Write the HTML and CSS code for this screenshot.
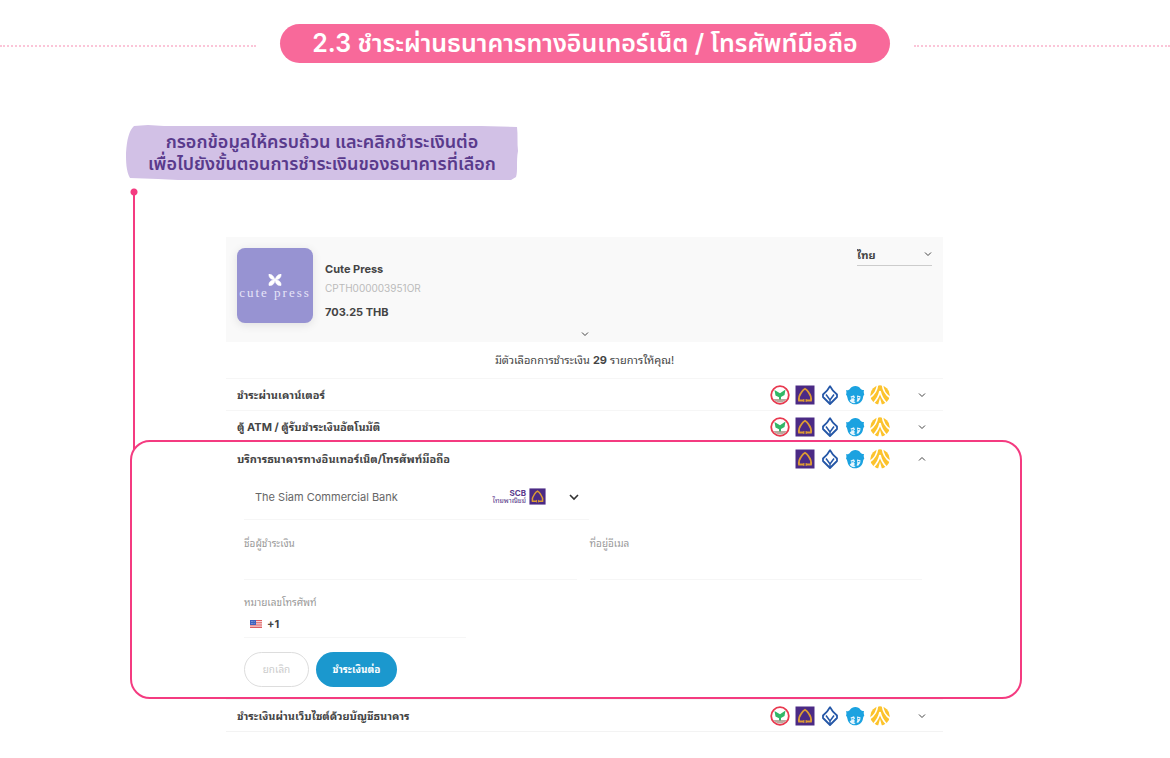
FILE: index.html
```html
<!DOCTYPE html>
<html lang="th">
<head>
    <meta charset="UTF-8">
    <meta name="viewport" content="width=device-width, initial-scale=1.0">
    <title>Cute Press - ชำระเงิน</title>
    <link rel="stylesheet" href="styles.css">
</head>
<body>
    <!-- Shared icons -->
    <svg class="icon-defs" aria-hidden="true">
        <symbol id="kbank" viewBox="0 0 20 20">
            <circle cx="10" cy="10" r="8.8" fill="#fff" stroke="#e8394f" stroke-width="1.800"/>
            <path d="M3.500 14h13c-1.300 2.200-3.500 3.500-6.500 3.500S4.800 16.200 3.500 14z" fill="#b9a99e"/>
            <path d="M9 14.500v-2.300L5.500 10.500 4.500 5l5.500 3.200L15.500 4.500l-1 5.500-3.500 2v2.500z" fill="#32b767"/>
        </symbol>
        <symbol id="scb" viewBox="0 0 20 20">
            <path d="M.5.5h19v19H.5z" fill="#4b2a85"/>
            <path d="M9 15.500H4c-.6-3.500.8-6 2.300-8C7.300 6 8.500 4.500 10 3.700c1.500.8 2.700 2.300 3.700 3.800 1.500 2 2.900 4.500 2.300 8h-5" fill="none" stroke="#dd9c33" stroke-width="1.800"/>
            <path d="M8.900 14v3M11.100 14v3" stroke="#dd9c33" stroke-width="1"/>
        </symbol>
        <symbol id="bbl" viewBox="0 0 20 20">
            <path d="M10 1.200C8.500 4.500 6 7 3 9.500v2.500l7 7 7-7V9.500C14 7 11.500 4.500 10 1.200z" fill="#fff" stroke="#2557a7" stroke-width="1.800" stroke-linejoin="round"/>
            <path d="m6 9.500 4 5.500 4-5.500M10 15v3" fill="none" stroke="#2557a7" stroke-width="1.500"/>
        </symbol>
        <symbol id="ktb" viewBox="0 0 20 20">
            <path d="M1 5c1.800.5 3 0 4-1.300C6.300 1.800 8.200 1 10.300 1c2.400 0 4.200 1 5.200 2.800 1 .9 2 1.300 3.500 1.200-.5 1.500-.2 3 .3 4.500-.7 1-1.300 2-1.400 3.500-.6 3.700-3.700 6.300-7.700 6.300S3.300 17 2.500 13C2.300 11.500 1.800 10.300 1 9.500c.7-1.500.5-3 0-4.500z" fill="#1ba2e0"/>
            <path d="M5.500 11.500 9 10.300l1 2.200-1.300 1.300 1.500 1.200-1.700 1.200 2.200.8-1.500 1.200c-2 0-3.500-1-4.500-2.700l1.800-1.500zM12 10.500l3.500.8-.3 2.700-2 2.800-1.700-.3.8-2z" fill="#e9f6fd"/>
            <path d="M6.500 12.800h2M12.800 12.600h1.700" stroke="#1ba2e0" stroke-width="1"/>
        </symbol>
        <symbol id="bay" viewBox="0 0 20 20">
            <circle cx="10" cy="10" r="9.700" fill="#fcc32c"/>
            <path d="M7.500 0C7 5 4.500 9.500 0 12.500M12.500 0c.5 5 3 9.500 7.500 12.500M10 6c-1 5-3 8.500-6.500 12M10 6c1 5 3 8.500 6.500 12" fill="none" stroke="#fff" stroke-width="1.600"/>
            <path d="M10 13 8 20h4z" fill="#fff"/>
        </symbol>
        <symbol id="chevron" viewBox="0 0 8 8">
            <path d="m1 2.500 3 3 3-3" fill="none" stroke="currentColor"/>
        </symbol>
    </svg>

    <header class="section-title">
        <h1>2.3 ชำระผ่านธนาคารทางอินเทอร์เน็ต / โทรศัพท์มือถือ</h1>
    </header>

    <main>
        <div class="note">
            <svg class="note-bg" viewBox="0 0 392 56" preserveAspectRatio="none" aria-hidden="true">
                <path d="M8 1 22 0l16 1h317l36 1c1 8 0 16 1 24-2 10 0 20-2 26l-5 3H60l-8 0-20-1-28-1C0 46 0 36 0 28 1 14 3 6 8 1z" fill="#d2c1e6"/>
            </svg>
            <p>กรอกข้อมูลให้ครบถ้วน และคลิกชำระเงินต่อ<br>เพื่อไปยังขั้นตอนการชำระเงินของธนาคารที่เลือก</p>
        </div>

        <div class="checkout">
            <div class="merchant">
                <div class="merchant-logo">
                    <svg viewBox="0 0 14 12" aria-hidden="true">
                        <path d="M7 6C6 2 3 0 1 0c-.5 3 1.500 5.500 6 6zM7 6c1-4 4-6 6-6 .5 3-1.500 5.500-6 6zM7 6c-4 0-6.500 2-6 5.500C4 12 6.500 10 7 6zM7 6c4 0 6.500 2 6 5.500C10 12 7.500 10 7 6z" fill="#fff" stroke="#fff" stroke-width=".6"/>
                    </svg>
                    <span>cute press</span>
                </div>
                <div class="merchant-info">
                    <strong>Cute Press</strong>
                    <span class="order-id">CPTH000003951OR</span>
                    <strong>703.25 THB</strong>
                </div>
                <div class="language">
                    <select aria-label="ภาษา">
                        <option>ไทย</option>
                    </select>
                    <svg class="chevron" aria-hidden="true"><use href="#chevron"/></svg>
                </div>
                <button type="button" class="details-toggle" aria-label="รายละเอียด">
                    <svg class="chevron"><use href="#chevron"/></svg>
                </button>
            </div>

            <p class="summary">มีตัวเลือกการชำระเงิน <b>29</b> รายการให้คุณ!</p>

            <section class="method">
                <button type="button" class="method-header">
                    <span class="method-name">ชำระผ่านเคาน์เตอร์</span>
                    <span class="banks">
                        <svg><use href="#kbank"/></svg>
                        <svg><use href="#scb"/></svg>
                        <svg><use href="#bbl"/></svg>
                        <svg><use href="#ktb"/></svg>
                        <svg><use href="#bay"/></svg>
                    </span>
                    <svg class="chevron"><use href="#chevron"/></svg>
                </button>
            </section>

            <section class="method">
                <button type="button" class="method-header">
                    <span class="method-name">ตู้ ATM / ตู้รับชำระเงินอัตโนมัติ</span>
                    <span class="banks">
                        <svg><use href="#kbank"/></svg>
                        <svg><use href="#scb"/></svg>
                        <svg><use href="#bbl"/></svg>
                        <svg><use href="#ktb"/></svg>
                        <svg><use href="#bay"/></svg>
                    </span>
                    <svg class="chevron"><use href="#chevron"/></svg>
                </button>
            </section>

            <section class="method open">
                <button type="button" class="method-header" aria-expanded="true">
                    <span class="method-name">บริการธนาคารทางอินเทอร์เน็ต/โทรศัพท์มือถือ</span>
                    <span class="banks">
                        <svg><use href="#scb"/></svg>
                        <svg><use href="#bbl"/></svg>
                        <svg><use href="#ktb"/></svg>
                        <svg><use href="#bay"/></svg>
                    </span>
                    <svg class="chevron"><use href="#chevron"/></svg>
                </button>

                <form class="payment-form">
                    <div class="bank-select">
                        <select aria-label="ธนาคาร">
                            <option>The Siam Commercial Bank</option>
                        </select>
                        <span class="bank-logo">
                            <span class="bank-logo-text"><b>SCB</b>ไทยพาณิชย์</span>
                            <svg class="bank-logo-icon"><use href="#scb"/></svg>
                        </span>
                        <svg class="chevron" viewBox="0 0 10 10"><path d="m1 3 4 4 4-4" fill="none" stroke="#333" stroke-width="1.600"/></svg>
                    </div>

                    <div class="fields">
                        <div class="field">
                            <label for="payer">ชื่อผู้ชำระเงิน</label>
                            <input type="text" id="payer">
                        </div>
                        <div class="field">
                            <label for="email">ที่อยู่อีเมล</label>
                            <input type="email" id="email">
                        </div>
                    </div>

                    <div class="field phone">
                        <label for="phone">หมายเลขโทรศัพท์</label>
                        <div class="phone-input">
                            <svg class="flag" viewBox="0 0 12 8" aria-hidden="true">
                                <path d="M0 0h12v8H0z" fill="#f6d5d5"/>
                                <path d="M0 .5h12M0 2.700h12M0 5h12M0 7.400h12" stroke="#dd5d60" stroke-width="1.100"/>
                                <path d="M0 0h6v5H0z" fill="#3f62bd"/>
                                <path d="M1 1.500h4M1 3.500h4" stroke="#b8c7ee" stroke-width=".7" stroke-dasharray=".7 .7"/>
                            </svg>
                            <input type="tel" id="phone" value="+1">
                        </div>
                    </div>

                    <div class="actions">
                        <button type="button" class="cancel-button">ยกเลิก</button>
                        <button type="submit" class="pay-button">ชำระเงินต่อ</button>
                    </div>
                </form>
            </section>

            <section class="method">
                <button type="button" class="method-header">
                    <span class="method-name">ชำระเงินผ่านเว็บไซต์ด้วยบัญชีธนาคาร</span>
                    <span class="banks">
                        <svg><use href="#kbank"/></svg>
                        <svg><use href="#scb"/></svg>
                        <svg><use href="#bbl"/></svg>
                        <svg><use href="#ktb"/></svg>
                        <svg><use href="#bay"/></svg>
                    </span>
                    <svg class="chevron"><use href="#chevron"/></svg>
                </button>
            </section>
        </div>
    </main>
</body>
</html>
```
FILE: styles.css
```css
* {
    box-sizing: border-box;
}
body {
    margin: 0;
    padding: 24px 0;
    background-color: #fff;
    font-family: "Inter", "Noto Sans Thai Looped", "Noto Sans Thai", sans-serif;
    font-size: 11px;
    color: #444;
}
button, input, select {
    font-family: inherit;
    font-size: inherit;
    color: inherit;
    background: none;
    border: none;
    padding: 0;
    margin: 0;
}
button {
    cursor: pointer;
}
select {
    appearance: none;
}
.icon-defs {
    display: none;
}
.chevron {
    width: 8px;
    height: 8px;
}

/* Section title */
.section-title {
    display: flex;
    align-items: center;
    gap: 24px;
    font-family: "Inter", "Noto Sans Thai", sans-serif;
}
.section-title::before,
.section-title::after {
    content: "";
    flex: 1;
    margin-top: 4px;
    border-top: 2px dotted #fbc5d8;
}
.section-title h1 {
    margin: 0;
    padding: 0 32px;
    line-height: 39px;
    border-radius: 20px;
    background-color: #f8699a;
    color: #fff;
    font-size: 25px;
    font-weight: 600;
    white-space: nowrap;
}

/* Note */
.note {
    position: relative;
    width: 392px;
    margin: 62px 0 56px 126px;
    padding: 6px 0;
}
.note-bg {
    position: absolute;
    top: 0;
    left: 0;
    width: 100%;
    height: 100%;
}
.note p {
    position: relative;
    margin: 0;
    color: #593a8c;
    font-family: "Inter", "Noto Sans Thai", sans-serif;
    font-size: 18px;
    font-weight: 600;
    line-height: 22px;
    text-align: center;
    white-space: nowrap;
}

/* Checkout */
.checkout {
    margin: 0 227px 0 226px;
}
.merchant {
    display: grid;
    grid-template-columns: 76px 1fr 75px;
    column-gap: 12px;
    padding: 11px 11px 4px;
    background-color: #f9f9f9;
}
.merchant-logo {
    display: flex;
    flex-direction: column;
    align-items: center;
    height: 75px;
    padding-top: 26px;
    border-radius: 8px;
    background-color: #9793d2;
    box-shadow: 0 2px 10px rgba(0, 0, 0, 0.1);
    color: #e6e4f8;
    font-family: "Liberation Serif", serif;
    font-size: 13px;
    line-height: 14px;
    letter-spacing: 2px;
    white-space: nowrap;
}
.merchant-logo svg {
    width: 14px;
    height: 12px;
}
.merchant-info {
    display: flex;
    flex-direction: column;
    padding-top: 13px;
    line-height: 16px;
}
.merchant-info .order-id {
    margin: 3px 0 8px;
    color: #bbb;
    font-size: 10px;
}
.language {
    position: relative;
    align-self: start;
    border-bottom: 1px solid #ccc;
}
.language select {
    display: block;
    width: 100%;
    height: 17px;
    padding-bottom: 4px;
    font-weight: bold;
}
.language .chevron {
    position: absolute;
    right: 0;
    top: 2px;
    pointer-events: none;
}
.details-toggle {
    grid-column: 1 / -1;
    display: flex;
    justify-content: center;
    padding: 7px 0 0;
}
.summary {
    margin: 0;
    line-height: 36px;
    font-size: 11px;
    text-align: center;
}

/* Payment methods */
.method {
    border-top: 1px solid #f6f6f6;
}
.method:last-child {
    border-bottom: 1px solid #f3f3f3;
}
.method-header {
    display: flex;
    align-items: center;
    width: 100%;
    height: 31px;
    padding: 0 17px 0 11px;
    text-align: left;
}
.method-name {
    flex: 1;
    padding-bottom: 2px;
    font-weight: bold;
}
.banks {
    display: flex;
    gap: 5px;
    margin-right: 28px;
}
.banks svg {
    width: 20px;
    height: 20px;
}
.method.open {
    position: relative;
    border-color: transparent;
    padding-bottom: 12px;
}
.method.open .method-header .chevron {
    transform: rotate(180deg);
}
/* Highlight frame and its pointer */
.method.open::before {
    content: "";
    position: absolute;
    top: -3px;
    bottom: 0;
    left: -96px;
    right: -79px;
    border: 2px solid #f43b80;
    border-radius: 20px;
    pointer-events: none;
}
.note::after {
    content: "";
    position: absolute;
    top: 63px;
    left: 4px;
    width: 8px;
    height: 262px;
    background:
        radial-gradient(circle at 4px 4px, #f43b80 3px, transparent 4px) top / 8px 8px no-repeat,
        linear-gradient(#f43b80, #f43b80) bottom / 2px calc(100% - 4px) no-repeat;
}

/* Payment form */
.payment-form {
    padding: 0 21px 0 18px;
}
.bank-select {
    position: relative;
    width: 345px;
    border-bottom: 1px solid #f6f6f6;
}
.bank-select select {
    display: block;
    width: 100%;
    height: 45px;
    padding-left: 11px;
    color: #666;
}
.bank-logo {
    position: absolute;
    top: 14px;
    right: 43px;
    display: flex;
    align-items: center;
    gap: 3px;
    pointer-events: none;
}
.bank-logo-text {
    color: #593a8c;
    font-size: 7px;
    line-height: 8px;
    text-align: right;
}
.bank-logo-text b {
    display: block;
    font-size: 8px;
}
.bank-logo-icon {
    width: 17px;
    height: 17px;
}
.bank-select .chevron {
    position: absolute;
    top: 18px;
    right: 10px;
    width: 10px;
    height: 10px;
    pointer-events: none;
}
.fields {
    display: grid;
    grid-template-columns: 1fr 1fr;
    gap: 13px;
    margin-top: 15px;
}
.field label {
    display: block;
    color: #999;
    font-size: 10px;
    line-height: 16px;
}
.field input {
    width: 100%;
    height: 29px;
    border-bottom: 1px solid #f6f6f6;
}
.phone {
    width: 222px;
    margin-top: 14px;
}
.phone-input {
    display: flex;
    align-items: center;
    gap: 5px;
    padding-left: 6px;
    border-bottom: 1px solid #f6f6f6;
}
.phone-input input {
    flex: 1;
    height: 27px;
    border: none;
    font-weight: bold;
}
.flag {
    width: 12px;
    height: 8px;
}
.actions {
    display: flex;
    gap: 7px;
    margin-top: 14px;
}
.actions button {
    height: 35px;
    padding-bottom: 2px;
    border-radius: 18px;
    font-size: 10px;
}
.cancel-button {
    width: 65px;
    border: 1px solid #ddd;
    color: #ccc;
}
.pay-button {
    width: 81px;
    background-color: #1b98ce;
    color: #fff;
    font-weight: bold;
}
```
